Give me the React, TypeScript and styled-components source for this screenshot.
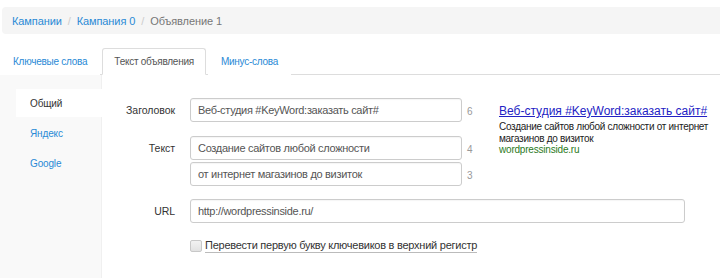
import React from "react";
import styled, { createGlobalStyle } from "styled-components";

const Global = createGlobalStyle`
  html, body { margin: 0; padding: 0; background: #fff; }
  body { font-family: "Liberation Sans", Arial, sans-serif; font-size: 11px; color: #333; }
  * { box-sizing: border-box; }
`;

const Page = styled.div`
  padding-top: 7px;
  width: 720px;
  height: 278px;
  overflow: hidden;
  display: flex;
  flex-direction: column;
`;

const Breadcrumb = styled.ol`
  list-style: none;
  margin: 0 0 0 2px;
  padding: 0 10px;
  height: 27px;
  background: #f5f5f5;
  border-radius: 4px 0 0 4px;
  display: flex;
  align-items: center;
  font-size: 11px;
  letter-spacing: -0.1px;
  & > li + li::before {
    content: "/";
    color: #ccc;
    padding: 0 6px 0 6px;
  }
`;

const Crumb = styled.li<{ $active?: boolean }>`
  color: ${(p) => (p.$active ? "#777" : "#2a8ad6")};
`;

const Tabs = styled.ul`
  list-style: none;
  margin: 14px 0 0;
  padding: 0;
  height: 27px;
  display: flex;
  border-bottom: 1px solid #ddd;
`;

const Tab = styled.li<{ $active?: boolean }>`
  margin-right: 2px;
  padding: 0 12px 0 12px;
  height: 27px;
  display: flex;
  align-items: center;
  font-size: 10px;
  letter-spacing: -0.25px;
  border: 1px solid ${(p) => (p.$active ? "#ddd" : "transparent")};
  border-bottom-color: ${(p) => (p.$active ? "#fff" : "transparent")};
  border-radius: 3px 3px 0 0;
  background: #fff;
  color: ${(p) => (p.$active ? "#555" : "#2a8ad6")};
  position: relative;
  z-index: 1;
  ${(p) => (p.$active ? "margin-bottom: -1px; padding: 0 11px;" : "")}
`;

const Body = styled.div`
  flex: 1;
  display: flex;
`;

const SideNav = styled.ul`
  list-style: none;
  margin: 0;
  padding: 14px 0 0 16px;
  width: 102px;
  background: #f9f9f9;
  border-right: 1px solid #f0f0f0;
  display: flex;
  flex-direction: column;
  gap: 2px;
`;

const NavItem = styled.li<{ $active?: boolean }>`
  height: 28px;
  padding-left: 14px;
  display: flex;
  align-items: center;
  font-size: 10px;
  letter-spacing: -0.15px;
  background: ${(p) => (p.$active ? "#fff" : "transparent")};
  color: ${(p) => (p.$active ? "#333" : "#2a8ad6")};
  margin-right: -1px;
`;

const Main = styled.div`
  flex: 1;
  padding-top: 23px;
  display: flex;
  flex-direction: column;
`;

const TopArea = styled.div`
  display: flex;
`;

const Fields = styled.div`
  display: flex;
  flex-direction: column;
  gap: 14px;
`;

const Row = styled.div<{ $mt?: number }>`
  display: flex;
  align-items: flex-start;
  margin-top: ${(p) => p.$mt ?? 0}px;
`;

const Label = styled.div`
  width: 73px;
  margin-right: 15px;
  height: 24px;
  display: flex;
  align-items: center;
  justify-content: flex-end;
  font-size: 10.5px;
  letter-spacing: -0.05px;
  color: #333;
`;

const Stack = styled.div`
  display: flex;
  flex-direction: column;
  gap: 2px;
`;

const InputLine = styled.div`
  display: flex;
  align-items: center;
`;

const Input = styled.div<{ $w: number }>`
  width: ${(p) => p.$w}px;
  height: 24px;
  border: 1px solid #ccc;
  border-radius: 3px;
  padding: 0 7px;
  display: flex;
  align-items: center;
  font-size: 11px;
  letter-spacing: -0.3px;
  color: #555;
  background: #fff;
  box-shadow: inset 0 1px 1px rgba(0, 0, 0, 0.04);
  white-space: nowrap;
`;

const Counter = styled.span`
  width: 12px;
  margin-left: 5px;
  margin-top: 2px;
  font-size: 10px;
  color: #999;
`;

const Preview = styled.div`
  margin-left: 20px;
  margin-top: 5px;
  width: 214px;
`;

const AdTitle = styled.a`
  display: block;
  font-size: 12px;
  color: #2222c4;
  text-decoration: underline;
  white-space: nowrap;
  line-height: 16px;
`;

const AdText = styled.div`
  font-size: 10px;
  letter-spacing: -0.3px;
  line-height: 11.5px;
  color: #222;
  margin-top: 2px;
`;

const AdUrl = styled.div`
  font-size: 10px;
  letter-spacing: -0.2px;
  line-height: 12px;
  color: #2b7a1c;
`;

const CheckRow = styled.label`
  margin: 16px 0 0 88px;
  display: flex;
  align-items: center;
  gap: 3px;
  font-size: 11px;
  letter-spacing: -0.25px;
  color: #333;
`;

const Box = styled.span`
  width: 12px;
  height: 12px;
  border: 1px solid #c8c8c8;
  border-radius: 2px;
  background: linear-gradient(#f2f2f2, #e2e2e2);
`;

const CheckText = styled.span`
  border-bottom: 1px solid #bbb;
  line-height: 13px;
`;

export default function App() {
  return (
    <>
      <Global />
      <Page>
        <Breadcrumb>
          <Crumb>Кампании</Crumb>
          <Crumb>Кампания 0</Crumb>
          <Crumb $active>Объявление 1</Crumb>
        </Breadcrumb>
        <Tabs>
          <Tab>Ключевые слова</Tab>
          <Tab $active>Текст объявления</Tab>
          <Tab>Минус-слова</Tab>
        </Tabs>
        <Body>
          <SideNav>
            <NavItem $active>Общий</NavItem>
            <NavItem>Яндекс</NavItem>
            <NavItem>Google</NavItem>
          </SideNav>
          <Main>
            <TopArea>
              <Fields>
                <Row>
                  <Label>Заголовок</Label>
                  <InputLine>
                    <Input $w={272}>Веб-студия #KeyWord:заказать сайт#</Input>
                    <Counter>6</Counter>
                  </InputLine>
                </Row>
                <Row>
                  <Label>Текст</Label>
                  <Stack>
                    <InputLine>
                      <Input $w={272}>Создание сайтов любой сложности</Input>
                      <Counter>4</Counter>
                    </InputLine>
                    <InputLine>
                      <Input $w={272}>от интернет магазинов до визиток</Input>
                      <Counter>3</Counter>
                    </InputLine>
                  </Stack>
                </Row>
              </Fields>
              <Preview>
                <AdTitle>Веб-студия #KeyWord:заказать сайт#</AdTitle>
                <AdText>Создание сайтов любой сложности от интернет магазинов до визиток</AdText>
                <AdUrl>wordpressinside.ru</AdUrl>
              </Preview>
            </TopArea>
            <Row $mt={13}>
              <Label>URL</Label>
              <Input $w={495}>http://wordpressinside.ru/</Input>
            </Row>
            <CheckRow>
              <Box />
              <CheckText>Перевести первую букву ключевиков в верхний регистр</CheckText>
            </CheckRow>
          </Main>
        </Body>
      </Page>
    </>
  );
}
